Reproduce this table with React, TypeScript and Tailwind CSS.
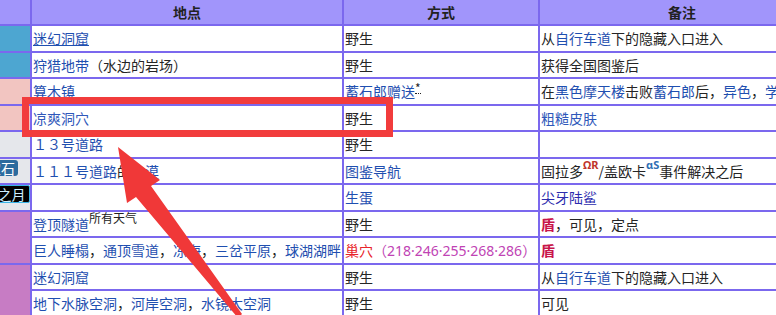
import React from "react"

const cell = "bg-white flex items-center pl-[1px] whitespace-nowrap overflow-hidden text-[#252525]"
const head = "bg-[#a195fb] flex items-center justify-center font-bold text-[#222]"
const link = "text-[#1f4fb0]"
const latin = "font-['Noto_Sans','Noto_Sans_CJK_SC',sans-serif]"

const Sup = ({ children, className }: { children: React.ReactNode; className: string }) => (
    <span className={"relative -top-[6px] text-[11px] font-bold leading-none " + latin + " " + className}>{children}</span>
)

const App = () => {
    return (
        <div className="relative w-[776px] h-[315px] overflow-hidden bg-white font-['Noto_Sans_CJK_SC',sans-serif] text-[14px] leading-none">
            <div className="grid w-max -ml-[80px] grid-cols-[110px_310px_194px_284px] grid-rows-[24px] auto-rows-[24.5px] gap-[2px] bg-[#7b68ee]">
                {/* header */}
                <div className={head} />
                <div className={head}>地点</div>
                <div className={head}>方式</div>
                <div className={head}>备注</div>

                {/* 1 */}
                <div className="bg-[#4da6d1]" />
                <div className={cell}><span className={link + " underline"}>迷幻洞窟</span></div>
                <div className={cell}>野生</div>
                <div className={cell}>从<span className={link}>自行车道</span>下的隐藏入口进入</div>

                {/* 2 */}
                <div className="bg-[#4da6d1]" />
                <div className={cell}><span className={link}>狩猎地带</span>（水边的岩场）</div>
                <div className={cell}>野生</div>
                <div className={cell}>获得全国图鉴后</div>

                {/* 3 */}
                <div className="bg-[#f2c5c1]" />
                <div className={cell}><span className={link}>算木镇</span></div>
                <div className={cell}>
                    <span className={link}>蓄石郎赠送</span>
                    <span className="relative -top-[3px] border-b border-dotted border-[#222] text-[12px] leading-[11px]">*</span>
                </div>
                <div className={cell}>
                    在<span className={link}>黑色摩天楼</span>击败<span className={link}>蓄石郎</span>后，<span className={link}>异色</span>，<span className={link}>学习招式</span>
                </div>

                {/* 4 */}
                <div className="bg-[#f2c5c1]" />
                <div className={cell}><span className="text-[#2f58ba]">凉爽洞穴</span></div>
                <div className={cell}>野生</div>
                <div className={cell}><span className="text-[#2f58ba]">粗糙皮肤</span></div>

                {/* 5 */}
                <div className="bg-[#e5e7eb]" />
                <div className={cell}><span className={link}>１３号道路</span></div>
                <div className={cell}>野生</div>
                <div className={cell} />

                {/* 6 */}
                <div className="bg-[#e5e7eb] flex justify-end items-start pt-[1.5px] pr-[12px]">
                    <span className="bg-[#2c6b9e] text-white rounded-[3px] px-[3px] h-[16px] flex items-center">始源蓝宝石</span>
                </div>
                <div className={cell}><span className={link}>１１１号道路</span>的<span className={link}>沙漠</span></div>
                <div className={cell}><span className={link}>图鉴导航</span></div>
                <div className={cell}>
                    固拉多<Sup className="text-[#c0332b]">ΩR</Sup>/盖欧卡<Sup className="text-[#2f6fb5]">αS</Sup>事件解决之后
                </div>

                {/* 7 */}
                <div className="bg-[#e5e7eb] flex justify-end items-start pr-[0.5px]">
                    <span className="bg-black text-[#cdefff] border border-[#3ab4e6] rounded-[2px] px-[3px] h-[18px] flex items-center">究极之月</span>
                </div>
                <div className={cell} />
                <div className={cell}><span className={link}>生蛋</span></div>
                <div className={cell}><span className="text-[#2c2cae]">尖牙陆鲨</span></div>

                {/* 8 + 9 */}
                <div className="bg-[#c77cc4] row-span-2" />
                <div className={cell}>
                    <span className={link}>登顶隧道</span>
                    <span className="relative -top-[6px] text-[12px] text-[#222]">所有天气</span>
                </div>
                <div className={cell}>野生</div>
                <div className={cell}><span className="font-bold text-[#c8154a]">盾</span>，可见，定点</div>

                <div className={cell}>
                    <span className={link}>巨人睡榻</span>，<span className={link}>通顶雪道</span>，<span className={link}>冻海</span>，<span className={link}>三岔平原</span>，<span className={link}>球湖湖畔</span>
                </div>
                <div className={cell}>
                    <span className="text-[#e8232a]">巢穴</span>
                    <span className="text-[#c043b4]">（<span className={latin}>218·246·255·268·286</span>）</span>
                </div>
                <div className={cell}><span className="font-bold text-[#c8154a]">盾</span></div>

                {/* 10 + 11 */}
                <div className="bg-[#c77cc4] row-span-2" />
                <div className={cell}><span className={link}>迷幻洞窟</span></div>
                <div className={cell}>野生</div>
                <div className={cell}>从<span className={link}>自行车道</span>下的隐藏入口进入</div>

                <div className={cell}>
                    <span className={link}>地下水脉空洞</span>，<span className={link}>河岸空洞</span>，<span className={link}>水镜大空洞</span>
                </div>
                <div className={cell}>野生</div>
                <div className={cell}>可见</div>
            </div>

            {/* annotation: box + arrow */}
            <div className="absolute left-[22px] top-[97px] w-[371px] h-[40px] border-[7.5px] border-[#f23c3c]" />
            <svg className="absolute left-0 top-0" width="776" height="315" viewBox="0 0 776 315">
                <polygon
                    fill="#f03838"
                    points="118,147 160,180 151,186 242,314 238,318 136,197 127,203"
                />
            </svg>
        </div>
    )
}

export default App
